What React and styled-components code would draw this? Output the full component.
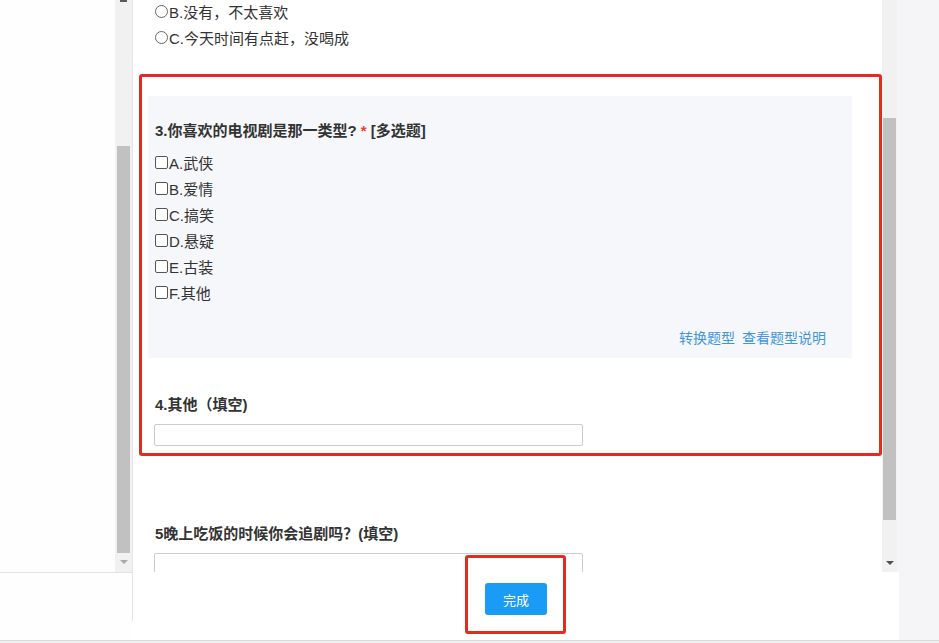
import React from "react";
import styled, { createGlobalStyle } from "styled-components";

const GlobalStyle = createGlobalStyle`
  html, body {
    margin: 0;
    padding: 0;
  }
  body {
    font-family: "Liberation Sans", "Noto Sans CJK SC", sans-serif;
    background: #f3f3f5;
  }
  * {
    box-sizing: border-box;
  }
`;

const checkOptions = ["A.武侠", "B.爱情", "C.搞笑", "D.悬疑", "E.古装", "F.其他"];

const App = () => {
  return (
    <Page>
      <GlobalStyle />
      <Top>
        <LeftPane />
        <ScrollTrack $w={17}>
          <TopNub />
          <Thumb $top={144} $h={407} />
          <DownArrow $top={7} $color="#a8a8a8" />
        </ScrollTrack>
        <Main>
          <OptionList>
            <OptionRow>
              <Radio />
              B.没有，不太喜欢
            </OptionRow>
            <OptionRow>
              <Radio />
              C.今天时间有点赶，没喝成
            </OptionRow>
          </OptionList>

          {/* red annotation around question 3 and 4 */}
          <Highlight>
            <QuestionCard>
              <Title>
                3.你喜欢的电视剧是那一类型? <Required>*</Required> [多选题]
              </Title>
              {checkOptions.map((opt) => (
                <OptionRow key={opt}>
                  <Checkbox />
                  {opt}
                </OptionRow>
              ))}
              <Links>
                <LinkText>转换题型</LinkText>
                <LinkText>查看题型说明</LinkText>
              </Links>
            </QuestionCard>
            <FillBlock $ml={7} $mt={37}>
              <BlockTitle>4.其他（填空)</BlockTitle>
              <TextInput />
            </FillBlock>
          </Highlight>

          <FillBlock $ml={22} $mt={68}>
            <BlockTitle>5晚上吃饭的时候你会追剧吗？(填空)</BlockTitle>
            <TextInput />
          </FillBlock>
        </Main>
        <ScrollTrack $w={15}>
          <Thumb $top={118} $h={402} />
          <DownArrow $top={41} $color="#505050" />
        </ScrollTrack>
        <RightFill />
      </Top>
      <Footer>
        <FooterLeft>
          <VLine />
        </FooterLeft>
        <FooterMain>
          <ButtonWrap>
            <DoneButton>完成</DoneButton>
            <ButtonMark />
          </ButtonWrap>
        </FooterMain>
        <RightFill />
      </Footer>
      <BottomEdge />
    </Page>
  );
};

export default App;

const Page = styled.div`
  width: 939px;
  height: 643px;
  display: flex;
  flex-direction: column;
  overflow: hidden;
  background: #f5f5f7;
`;

const Top = styled.div`
  display: flex;
  height: 572px;
`;

const LeftPane = styled.div`
  width: 115px;
  background: #fefefe;
`;

const ScrollTrack = styled.div`
  width: ${(p) => p.$w}px;
  background: #f1f1f1;
  display: flex;
  flex-direction: column;
  align-items: center;
`;

const TopNub = styled.div`
  width: 7px;
  height: 2px;
  background: #5a5a5a;
`;

const Thumb = styled.div`
  width: 13px;
  margin-top: ${(p) => p.$top}px;
  height: ${(p) => p.$h}px;
  background: #c1c1c1;
`;

const DownArrow = styled.div`
  margin-top: ${(p) => p.$top}px;
  width: 0;
  height: 0;
  border-left: 4px solid transparent;
  border-right: 4px solid transparent;
  border-top: 4px solid ${(p) => p.$color};
`;

const Main = styled.div`
  width: 750px;
  border-left: 1px solid #e6e6e6;
  background: #ffffff;
  overflow: hidden;
  color: #333;
  font-size: 15px;
`;

const OptionList = styled.div`
  margin: -2px 0 0 22px;
`;

const OptionRow = styled.div`
  display: flex;
  align-items: center;
  height: 26px;
  font-size: 15px;
  color: #333;
`;

const Radio = styled.span`
  width: 13px;
  height: 13px;
  border: 1px solid #666;
  border-radius: 50%;
  margin-right: 1px;
`;

const Checkbox = styled.span`
  width: 13px;
  height: 13px;
  border: 1px solid #555;
  border-radius: 2px;
  margin-right: 1px;
  background: #fff;
`;

const Highlight = styled.div`
  margin: 24px 0 0 6px;
  border: 3px solid #e42b22;
  border-radius: 3px;
  padding: 19px 27px 7px 6px;
`;

const QuestionCard = styled.div`
  background: #f5f7fa;
  padding: 22px 26px 10px 7px;
`;

const Title = styled.div`
  height: 26px;
  line-height: 26px;
  font-weight: bold;
  margin-bottom: 5px;
  color: #333;
`;

const Required = styled.span`
  color: #e8403a;
`;

const Links = styled.div`
  margin-top: 23px;
  height: 20px;
  line-height: 20px;
  display: flex;
  justify-content: flex-end;
  gap: 7px;
`;

const LinkText = styled.span`
  color: #3f96dd;
  font-size: 14px;
`;

const FillBlock = styled.div`
  margin: ${(p) => p.$mt}px 0 0 ${(p) => p.$ml}px;
`;

const BlockTitle = styled.div`
  line-height: 20px;
  font-weight: bold;
  color: #333;
`;

const TextInput = styled.div`
  margin: 9px 0 0 -1px;
  width: 429px;
  height: 22px;
  border: 1px solid #cccccc;
  border-radius: 2px;
  background: #fff;
`;

const RightFill = styled.div`
  flex: 1;
  background: #f5f5f7;
`;

const Footer = styled.div`
  display: flex;
  height: 68px;
`;

const FooterLeft = styled.div`
  width: 133px;
  background: #fefefe;
  border-top: 1px solid #e3e3e3;
  display: flex;
  justify-content: flex-end;
`;

const VLine = styled.div`
  width: 1px;
  height: 48px;
  background: #e3e3e3;
`;

const FooterMain = styled.div`
  width: 766px;
  background: #ffffff;
  display: flex;
  justify-content: center;
  align-items: flex-start;
  padding-top: 11px;
`;

const ButtonWrap = styled.div`
  position: relative;
`;

const DoneButton = styled.button`
  width: 62px;
  height: 32px;
  border: none;
  border-radius: 3px;
  background: #1a9bf6;
  color: #fff;
  font-size: 13px;
  font-family: "Liberation Sans", "Noto Sans CJK SC", sans-serif;
  cursor: pointer;
`;

const ButtonMark = styled.div`
  position: absolute;
  left: -20px;
  right: -19px;
  top: -28px;
  bottom: -19px;
  border: 3px solid #e42b22;
  border-radius: 3px;
  pointer-events: none;
`;

const BottomEdge = styled.div`
  height: 3px;
  border-top: 1px solid #dadada;
  background: #efefef;
`;
